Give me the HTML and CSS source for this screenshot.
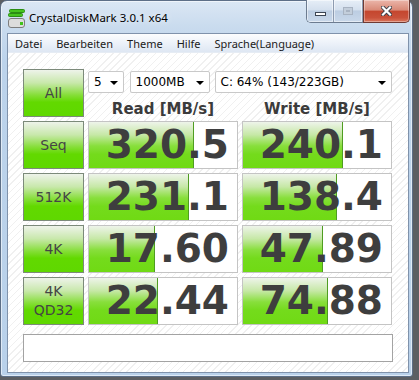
FILE: index.html
```html
<!DOCTYPE html>
<html lang="de">
<head>
  <meta charset="UTF-8" />
  <title>CrystalDiskMark 3.0.1 x64</title>
  <link rel="stylesheet" href="styles.css">
</head>
<body>
  <div class="window">
    <div class="titlebar">
      <svg class="app-icon" width="17" height="19" viewBox="0 0 17 19">
        <rect x="1.5" y="0.5" width="15" height="3" rx="1" fill="#46c41e" stroke="#2b8d12" />
        <rect x="0.5" y="4.5" width="14" height="3" rx="1" fill="#46c41e" stroke="#2b8d12" />
        <rect x="0.5" y="9.5" width="16" height="9" rx="2.5" fill="#dcdcdc" stroke="#7d7d7d" />
        <rect x="12" y="13" width="3" height="3" fill="#3fc21a" />
      </svg>
      <span class="title">CrystalDiskMark 3.0.1 x64</span>
      <div class="caption">
        <div class="cap-group">
          <span class="cap-btn"><i class="glyph-min"></i></span>
          <span class="cap-btn cap-max"><i class="glyph-max"></i></span>
        </div>
        <span class="cap-close">
          <svg width="11" height="10" viewBox="0 0 11 10">
            <path d="M2 1.5 L9 8.5 M9 1.5 L2 8.5" stroke="#3a3f48" stroke-width="4" stroke-linecap="square" />
            <path d="M2 1.5 L9 8.5 M9 1.5 L2 8.5" stroke="#ffffff" stroke-width="2.2" stroke-linecap="square" />
          </svg>
        </span>
      </div>
    </div>

    <div class="client">
      <div class="menubar">
        <span class="menu-item">Datei</span>
        <span class="menu-item">Bearbeiten</span>
        <span class="menu-item">Theme</span>
        <span class="menu-item">Hilfe</span>
        <span class="menu-item">Sprache(Language)</span>
      </div>

      <div class="main">
        <div class="grid">
          <div class="side-btn">All</div>
          <div class="controls">
            <div class="combos">
              <div class="combo combo-count">5</div>
              <div class="combo combo-size">1000MB</div>
              <div class="combo combo-drive">C: 64% (143/223GB)</div>
            </div>
            <div class="heads">
              <div class="head">Read [MB/s]</div>
              <div class="head">Write [MB/s]</div>
            </div>
          </div>

          <div class="side-btn">Seq</div>
          <div class="val"><div class="bar" style="width:105px"></div><span class="num">320.5</span></div>
          <div class="val"><div class="bar" style="width:100px"></div><span class="num">240.1</span></div>

          <div class="side-btn">512K</div>
          <div class="val"><div class="bar" style="width:100px"></div><span class="num">231.1</span></div>
          <div class="val"><div class="bar" style="width:94px"></div><span class="num">138.4</span></div>

          <div class="side-btn">4K</div>
          <div class="val"><div class="bar" style="width:66px"></div><span class="num">17.60</span></div>
          <div class="val"><div class="bar" style="width:80px"></div><span class="num">47.89</span></div>

          <div class="side-btn two-line">4K<br>QD32</div>
          <div class="val"><div class="bar" style="width:69px"></div><span class="num">22.44</span></div>
          <div class="val"><div class="bar" style="width:85px"></div><span class="num">74.88</span></div>
        </div>

        <div class="status"></div>
      </div>
    </div>
  </div>
</body>
</html>
```

FILE: styles.css
```css
* {
  box-sizing: border-box;
}

body {
  margin: 0;
  width: 419px;
  height: 380px;
  overflow: hidden;
  background: #5c5f63;
  font-family: "Noto Sans", "Liberation Sans", sans-serif;
}

.window {
  width: 413px;
  height: 377px;
  border: 1px solid #5d6f87;
  border-radius: 7px 7px 3px 3px;
  padding: 0 3px 3px 6px;
  display: flex;
  flex-direction: column;
  background: linear-gradient(#dbe7f4 0px, #c9dbee 26px, #bcd3eb 60px, #b9d1ea 100%);
  box-shadow: inset 0 0 0 1px rgba(255, 255, 255, 0.55);
}

/* title bar */

.titlebar {
  height: 32px;
  flex-shrink: 0;
  display: flex;
  align-items: flex-start;
}

.app-icon {
  margin: 8px 0 0 1px;
  flex-shrink: 0;
}

.title {
  margin: 9px 0 0 4px;
  font-size: 11.5px;
  line-height: 16px;
  color: #000;
  text-shadow: 0 0 6px rgba(255, 255, 255, 0.9);
}

.caption {
  margin: -1px -1px 0 auto;
  display: flex;
}

.cap-group {
  display: flex;
  height: 23px;
  border: 1px solid #6d7c90;
  border-top: none;
  border-right: none;
  border-radius: 0 0 0 5px;
  overflow: hidden;
}

.cap-btn {
  width: 27px;
  display: flex;
  align-items: center;
  justify-content: center;
  background: linear-gradient(#e6eef7 0%, #d4e0ee 45%, #bccde2 50%, #c9d8ea 100%);
  border-right: 1px solid #8d9bb0;
  box-shadow: inset 0 0 0 1px rgba(255, 255, 255, 0.5);
}

.cap-max {
  width: 29px;
}

.glyph-min {
  display: block;
  width: 11px;
  height: 4px;
  margin-top: 6px;
  background: #fff;
  border: 1px solid #3c4553;
}

.glyph-max {
  display: block;
  width: 10px;
  height: 8px;
  border: 1px solid #a8b3c2;
  box-shadow: inset 0 0 0 2px #c3cedb, inset 0 0 0 3px #a8b3c2;
}

.cap-close {
  width: 47px;
  height: 23px;
  display: flex;
  align-items: center;
  justify-content: center;
  border: 1px solid #6f3a33;
  border-top: none;
  border-radius: 0 0 5px 0;
  background: linear-gradient(#ebb6aa 0%, #d98a78 45%, #c5472f 52%, #c9513a 80%, #d9765c 100%);
  box-shadow: inset 0 0 0 1px rgba(255, 255, 255, 0.35);
}

/* client area */

.client {
  flex: 1;
  border: 1px solid #7f92ab;
  display: flex;
  flex-direction: column;
  background: #fff;
}

.menubar {
  height: 19px;
  flex-shrink: 0;
  display: flex;
  align-items: center;
  background: linear-gradient(#fcfdfe 0%, #eef3fa 45%, #dee7f3 100%);
  border-bottom: 1px solid #e6ecf4;
  font-size: 11px;
  color: #1b1b1b;
}

.menu-item {
  padding: 0 7px;
}

.main {
  flex: 1;
  padding: 16px 0 0 15px;
  background: repeating-linear-gradient(135deg, #ffffff 0px, #ffffff 4px, #f0f0f0 4px, #f0f0f0 5px);
}

.grid {
  display: grid;
  grid-template-columns: 61px 150px 150px;
  grid-template-rows: repeat(5, 48px);
  gap: 4px;
}

.side-btn {
  display: flex;
  align-items: center;
  justify-content: center;
  text-align: center;
  border: 1px solid #7c8a7a;
  background: linear-gradient(#eef3ea 0%, #c8e8ab 28%, #84de36 55%, #62d900 70%, #5fd800 100%);
  font-family: "DejaVu Sans", sans-serif;
  font-size: 14px;
  color: #454545;
}

.two-line {
  line-height: 19px;
}

.controls {
  grid-column: 2 / 4;
}

.combos {
  display: flex;
  gap: 5px;
  margin-top: 2px;
}

.combo {
  position: relative;
  height: 22px;
  padding-left: 5px;
  border: 1px solid #c9c9c9;
  border-radius: 2px;
  background: #fff;
  font-family: "DejaVu Sans", sans-serif;
  font-size: 12px;
  line-height: 20px;
  color: #000;
}

.combo::after {
  content: "";
  position: absolute;
  right: 5px;
  top: 9px;
  border-left: 4px solid transparent;
  border-right: 4px solid transparent;
  border-top: 4px solid #000;
}

.combo-count {
  width: 36px;
}

.combo-size {
  width: 81px;
  margin-left: 1px;
}

.combo-drive {
  width: 180px;
}

.heads {
  display: grid;
  grid-template-columns: 150px 150px;
  column-gap: 4px;
  margin-top: 6px;
}

.head {
  text-align: center;
  font-family: "DejaVu Sans", sans-serif;
  font-weight: bold;
  font-size: 15px;
  line-height: 20px;
  color: #3b3b3b;
}

.val {
  position: relative;
  overflow: hidden;
  border: 1px solid #c4c4c4;
  background: #fff;
  text-align: right;
  padding-right: 8px;
  font-family: "DejaVu Sans", sans-serif;
  font-weight: bold;
  font-size: 39px;
  line-height: 46px;
  color: #3e3e3e;
}

.bar {
  position: absolute;
  left: 0;
  top: 0;
  bottom: 0;
  border-right: 1px solid #4f9d21;
  background: linear-gradient(#eef4ea 0%, #c6e8a6 28%, #88df3c 52%, #74db1c 70%, #70da14 100%);
}

.num {
  position: relative;
}

.status {
  width: 370px;
  height: 28px;
  margin-top: 9px;
  border: 1px solid #a3a3a3;
  background: #fff;
}
```
